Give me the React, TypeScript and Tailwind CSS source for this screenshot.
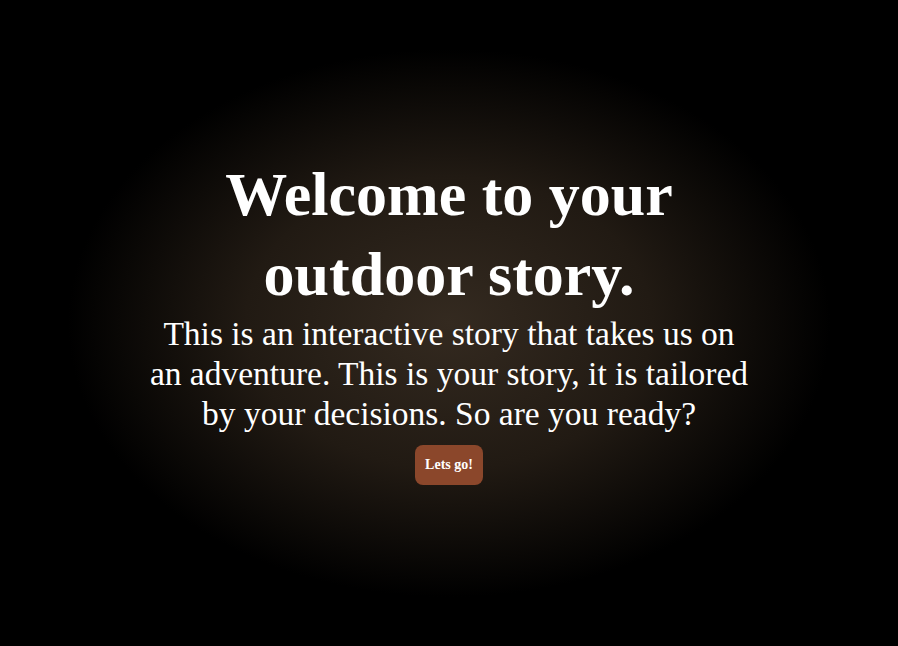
export default function App() {
  return (
    <div className="h-screen w-full flex items-center justify-center pb-[8px] bg-[radial-gradient(ellipse_at_center,#342a20_0%,#211a13_32%,#000_60%)] font-['Liberation_Serif',serif] text-white">
      <div className="flex flex-col items-center text-center w-[640px]">
        {/* Heading */}
        <h1 className="text-[62px] leading-[80px] font-bold">
          Welcome to your
          <br />
          outdoor story.
        </h1>
        {/* Intro */}
        <p className="text-[33.5px] leading-[40px]">
          This is an interactive story that takes us on
          <br />
          an adventure. This is your story, it is tailored
          <br />
          by your decisions. So are you ready?
        </p>
        <button className="mt-[11px] h-[40px] px-[10px] rounded-[8px] bg-[#8b472b] text-[14px] font-bold text-white">
          Lets go!
        </button>
      </div>
    </div>
  )
}
